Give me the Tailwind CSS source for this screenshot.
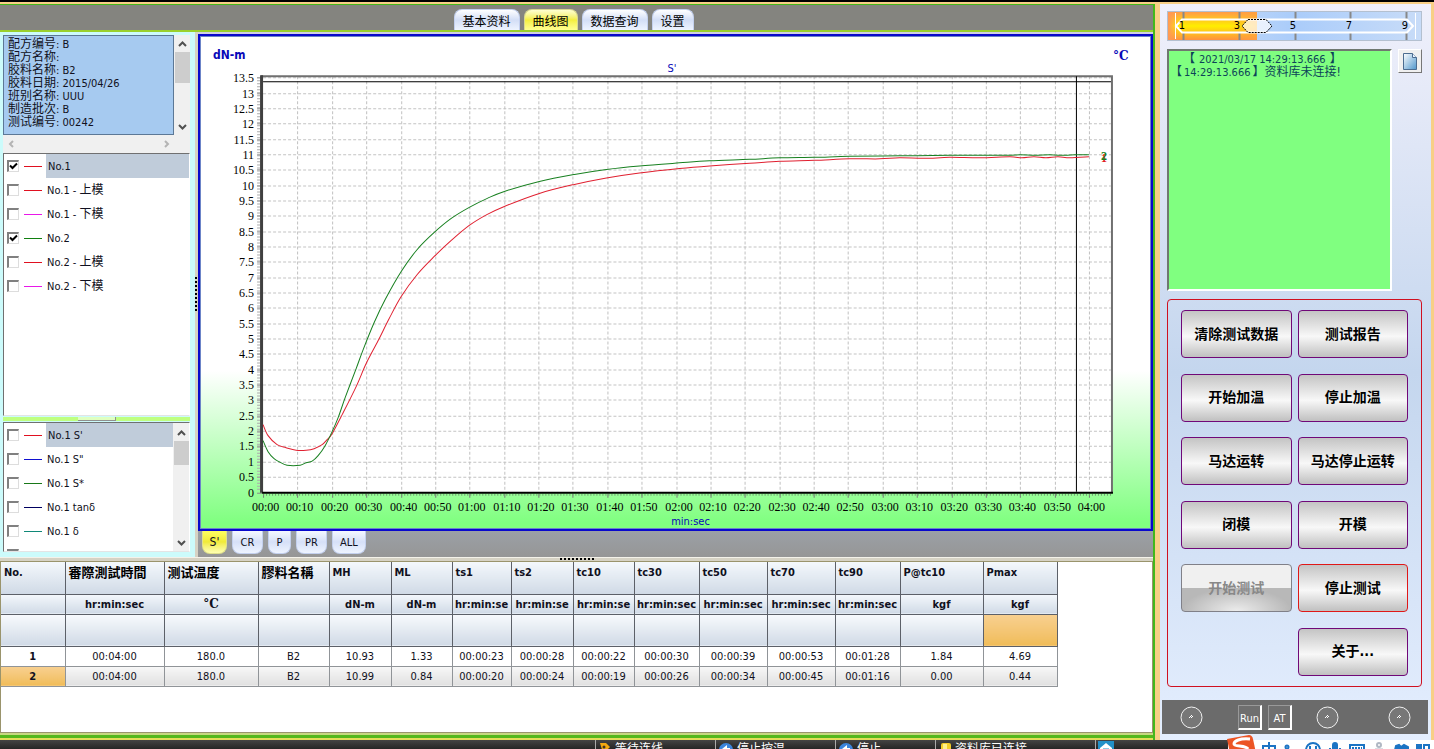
<!DOCTYPE html>
<html lang="zh-CN">
<head>
<meta charset="utf-8">
<title>曲线图</title>
<script src="https://cdn.jsdelivr.net/npm/@tailwindcss/browser@4"></script>
</head>
<body class="flex h-screen flex-col overflow-hidden border-t-2 border-black bg-[#f8cf86] font-['DejaVu_Sans_Condensed','Noto_Sans_CJK_SC',sans-serif] text-[11px] leading-[13px] text-[#101020]">

<div class="flex min-h-0 flex-1 pt-[2px]">
  <main class="flex min-w-0 flex-1 flex-col border-t border-r-2 border-[#43b81c] bg-[#d6d2c4]">

    <nav class="flex h-[27px] shrink-0 items-end justify-center gap-1 border-b-2 border-[#9ad02c] bg-[#84847f] pr-[6px] text-[12px] text-black">
      <button class="h-[21px] w-[66px] rounded-t-lg border border-b-0 border-[#c3d0ee] bg-linear-to-b from-white via-[#d3def6] to-[#eef4ff] pt-1">基本资料</button>
      <button class="h-[21px] w-[54px] rounded-t-lg border border-b-0 border-[#d8d890] bg-linear-to-b from-[#ffffd0] via-[#f4ee3c] to-[#ffff90] pt-1">曲线图</button>
      <button class="h-[21px] w-[66px] rounded-t-lg border border-b-0 border-[#c3d0ee] bg-linear-to-b from-white via-[#d3def6] to-[#eef4ff] pt-1">数据查询</button>
      <button class="h-[21px] w-[42px] rounded-t-lg border border-b-0 border-[#c3d0ee] bg-linear-to-b from-white via-[#d3def6] to-[#eef4ff] pt-1">设置</button>
    </nav>

    <div class="flex min-h-0 flex-1">
      <aside class="flex w-[195px] shrink-0 flex-col bg-[#ccfbfb] pt-[3px] pr-[5px] pb-[5px] pl-[3px]">
        <div class="flex h-[100px] shrink-0 bg-[#f0f0f0]">
          <div class="min-w-0 flex-1 border border-[#5c7896] bg-[#a6caf0] px-1 pt-[2px]">
            <p><span class="text-[12px]">配方编号</span>: B</p>
            <p><span class="text-[12px]">配方名称</span>:</p>
            <p><span class="text-[12px]">胶料名称</span>: B2</p>
            <p><span class="text-[12px]">胶料日期</span>: 2015/04/26</p>
            <p><span class="text-[12px]">班别名称</span>: UUU</p>
            <p><span class="text-[12px]">制造批次</span>: B</p>
            <p><span class="text-[12px]">测试编号</span>: 00242</p>
          </div>
          <div class="flex w-4 flex-col items-center justify-between pt-[6px] pb-[5px]">
            <svg class="h-[6px] w-[9px]" viewBox="0 0 9 6" fill="none" stroke="#505050" stroke-width="2"><path d="M1 5 4.500 1.500 8 5"/></svg>
            <div class="mb-auto mt-[5px] h-[31px] w-[15px] bg-[#cdcdcd]"></div>
            <svg class="h-[6px] w-[9px]" viewBox="0 0 9 6" fill="none" stroke="#505050" stroke-width="2"><path d="M1 1 4.500 4.500 8 1"/></svg>
          </div>
        </div>
        <div class="flex h-[18px] shrink-0 items-center justify-between bg-[#f0f0f0] pr-5 pl-[5px]">
          <svg class="h-[8px] w-[6px]" viewBox="0 0 6 8" fill="none" stroke="#b4b4b4" stroke-width="2"><path d="M5 1 2 4 5 7"/></svg>
          <svg class="h-[8px] w-[6px]" viewBox="0 0 6 8" fill="none" stroke="#b4b4b4" stroke-width="2"><path d="M1 1 4 4 1 7"/></svg>
        </div>
        <div id="molds" class="min-h-0 flex-1 overflow-hidden border border-[#707070] border-r-white border-b-[#e4e4e4] bg-white"></div>
        <div class="my-[1px] flex h-[4px] shrink-0 justify-center bg-[#bfff80]"><span class="w-[38px] border-r border-b border-[#909090] bg-[#dfffc0]"></span></div>
        <div class="flex h-[130px] shrink-0 overflow-hidden border border-[#707070] border-r-white border-b-[#e4e4e4] bg-white">
          <div id="series" class="min-w-0 flex-1 overflow-hidden"></div>
          <div class="flex w-4 flex-col items-center justify-between bg-[#f0f0f0] pt-[7px] pb-[5px]">
            <svg class="h-[6px] w-[9px]" viewBox="0 0 9 6" fill="none" stroke="#505050" stroke-width="2"><path d="M1 5 4.500 1.500 8 5"/></svg>
            <div class="mb-auto mt-[5px] h-6 w-[15px] bg-[#cdcdcd]"></div>
            <svg class="h-[6px] w-[9px]" viewBox="0 0 9 6" fill="none" stroke="#505050" stroke-width="2"><path d="M1 1 4.500 4.500 8 1"/></svg>
          </div>
        </div>
      </aside>
      <div class="flex w-[3px] shrink-0 flex-col pt-[245px]"><span class="h-[34px] border-l-2 border-dotted border-black"></span></div>

      <section class="flex min-w-0 flex-1 flex-col bg-[#d0d0e4] pt-[2px]">
        <div class="min-h-0 flex-1 border-2 border-[#0808cc]">
          <div class="h-full border border-[#6c84c8] bg-[linear-gradient(to_bottom,#fff_68%,#80ff80_99%)]">
            <svg id="chart" class="h-full w-full" viewBox="202 38 948 490" font-family="'Liberation Serif',serif" font-size="12"></svg>
          </div>
        </div>
        <div class="flex h-[26px] shrink-0 items-start gap-[5px] bg-linear-to-b from-[#9ba0a6] to-[#969696] pl-1 text-[12px]">
          <button class="h-[23px] w-[25px] rounded-b-lg border border-t-0 border-[#e0e08c] bg-linear-to-b from-[#ffff60] via-[#f0ea38] to-[#ffffb0]">S'</button>
          <button class="h-[23px] w-[31px] rounded-b-lg border border-t-0 border-[#c3d0ee] bg-linear-to-b from-[#f4f8ff] via-[#d6e0f8] to-[#eef4ff] text-[11px]">CR</button>
          <button class="h-[23px] w-[23px] rounded-b-lg border border-t-0 border-[#c3d0ee] bg-linear-to-b from-[#f4f8ff] via-[#d6e0f8] to-[#eef4ff] text-[11px]">P</button>
          <button class="h-[23px] w-[31px] rounded-b-lg border border-t-0 border-[#c3d0ee] bg-linear-to-b from-[#f4f8ff] via-[#d6e0f8] to-[#eef4ff] text-[11px]">PR</button>
          <button class="h-[23px] w-[34px] rounded-b-lg border border-t-0 border-[#c3d0ee] bg-linear-to-b from-[#f4f8ff] via-[#d6e0f8] to-[#eef4ff] text-[11px]">ALL</button>
        </div>
      </section>
    </div>

    <div class="flex h-[4px] shrink-0 justify-center border-t border-[#f4f2ea]"><span class="w-[34px] border-t-2 border-dotted border-black"></span></div>

    <section class="h-[172px] shrink-0 border border-[#9a946c] bg-white">
      <table class="w-[1056px] table-fixed border-collapse text-center">
        <colgroup id="cols"></colgroup>
        <thead id="thead"></thead>
        <tbody id="tbody"></tbody>
      </table>
    </section>
    <div class="h-[2px] shrink-0 bg-[#c8d880]"></div>
    <div class="h-[3px] shrink-0 bg-[#55b81c]"></div>
    <div class="h-[2px] shrink-0 bg-[#e4dc58]"></div>
  </main>

  <aside class="w-[279px] shrink-0 pr-[3px] pl-[5px]">
    <div class="flex h-full flex-col bg-[linear-gradient(to_bottom,#f0f0fb,#c4d6ee_50%,#e4eefe)] pt-[7px] pb-[6px]">
      <div class="relative mr-[9px] ml-[7px] h-[30px] shrink-0">
        <svg class="h-full w-full" viewBox="0 0 255 30" preserveAspectRatio="none" font-family="'DejaVu Sans Condensed'" font-size="11">
          <defs>
            <linearGradient id="heat" x2="0" y2="1"><stop offset="0" stop-color="#ff9a48"/><stop offset=".5" stop-color="#ffee00"/><stop offset="1" stop-color="#ff9040"/></linearGradient>
            <linearGradient id="fade"><stop offset="0" stop-color="#ff9858"/><stop offset=".12" stop-color="#ff9858" stop-opacity="0"/><stop offset=".7" stop-color="#ffa040" stop-opacity="0"/><stop offset="1" stop-color="#ffa040" stop-opacity=".7"/></linearGradient>
            <linearGradient id="cold"><stop offset="0" stop-color="#cfe0f8"/><stop offset=".5" stop-color="#aaccfa"/><stop offset="1" stop-color="#c8dcf8"/></linearGradient>
          </defs>
          <rect x=".5" y=".5" width="254" height="29" fill="url(#cold)" stroke="#b4c0d0"/>
          <rect x="1" y="1" width="89" height="28" fill="url(#heat)"/>
          <rect x="1" y="1" width="89" height="28" fill="url(#fade)"/>
          <path d="M16.500 1V9M16.500 22V29M72.500 1V9M72.500 22V29M128.500 1V9M128.500 22V29M183.500 1V9M183.500 22V29M239.500 1V9M239.500 22V29" stroke="#888" stroke-width="2"/>
          <path d="M8.500 2V28M248.500 2V28" stroke="#fff"/>
          <path d="M15 8.500H240L246 15 240 21.500H15L9 15Z" fill="none" stroke="#fff" stroke-width="2"/>
          <path d="M81 8.500H99L105 15 99 21.500H81L75 15Z" fill="#fff" fill-opacity=".7" stroke="#000" stroke-dasharray="2 1"/>
          <g text-anchor="middle" fill="#000"><text x="15" y="18">1</text><text x="70" y="18">3</text><text x="126" y="18">5</text><text x="182" y="18">7</text><text x="238" y="18">9</text></g>
        </svg>
        <input type="range" min="1" max="9" value="4" aria-label="级别" class="absolute inset-0 h-full w-full opacity-0">
      </div>
      <div class="mt-2 mr-[9px] ml-[7px] flex shrink-0 items-start justify-between">
        <div class="h-[242px] w-[225px] border-2 border-[#707870] border-r-white border-b-white bg-[#80ff80] pt-[2px] pl-[5px] text-[#0c4458]">
          <p class="flex"><span class="w-[9px]"></span><span class="text-[12px]">【</span><span class="pr-1 pl-1">2021/03/17 14:29:13.666</span><span class="text-[12px]">】</span></p>
          <p class="flex"><span class="-ml-1 text-[12px]">【</span><span class="pr-[2px] pl-[2px]">14:29:13.666</span><span class="text-[12px]">】资料库未连接!</span></p>
        </div>
        <button aria-label="新建" class="flex h-6 w-6 items-center justify-center border border-white border-r-[#777] border-b-[#777] bg-[#f0f0f0]">
          <svg class="h-[17px] w-[14px]" viewBox="0 0 14 17"><defs><linearGradient id="page" x2="1" y2="1"><stop offset="0" stop-color="#fff"/><stop offset="1" stop-color="#4f96cc"/></linearGradient></defs><path d="M.5.5h9l4 4v12H.5z" fill="url(#page)" stroke="#4c6c90"/><path d="M9.500.5v4h4" fill="#eaf4ff" stroke="#4c6c90"/></svg>
        </button>
      </div>
      <div class="mt-2 mr-[9px] ml-[7px] grid min-h-0 flex-1 grid-cols-2 content-between gap-x-[6px] rounded-[4px] border border-[#d01020] px-[13px] py-[10px] text-[14px] font-bold text-black">
        <button class="h-12 rounded-[4px] border border-[#700878] bg-[linear-gradient(to_bottom,#c4c4c4,#f8f8f8_55%,#c0c0c0)]">清除测试数据</button>
        <button class="h-12 rounded-[4px] border border-[#700878] bg-[linear-gradient(to_bottom,#c4c4c4,#f8f8f8_55%,#c0c0c0)]">测试报告</button>
        <button class="h-12 rounded-[4px] border border-[#700878] bg-[linear-gradient(to_bottom,#c4c4c4,#f8f8f8_55%,#c0c0c0)]">开始加温</button>
        <button class="h-12 rounded-[4px] border border-[#700878] bg-[linear-gradient(to_bottom,#c4c4c4,#f8f8f8_55%,#c0c0c0)]">停止加温</button>
        <button class="h-12 rounded-[4px] border border-[#700878] bg-[linear-gradient(to_bottom,#c4c4c4,#f8f8f8_55%,#c0c0c0)]">马达运转</button>
        <button class="h-12 rounded-[4px] border border-[#700878] bg-[linear-gradient(to_bottom,#c4c4c4,#f8f8f8_55%,#c0c0c0)]">马达停止运转</button>
        <button class="h-12 rounded-[4px] border border-[#700878] bg-[linear-gradient(to_bottom,#c4c4c4,#f8f8f8_55%,#c0c0c0)]">闭模</button>
        <button class="h-12 rounded-[4px] border border-[#700878] bg-[linear-gradient(to_bottom,#c4c4c4,#f8f8f8_55%,#c0c0c0)]">开模</button>
        <button disabled class="h-12 rounded-[4px] border border-[#808088] bg-[radial-gradient(ellipse_50%_50%_at_bottom,#ececec,transparent),linear-gradient(to_bottom,#f0f0f0_50%,#b8b8b8_50%)] text-[#888]">开始测试</button>
        <button class="h-12 rounded-[4px] border border-[#e01818] bg-[linear-gradient(to_bottom,#c4c4c4,#f8f8f8_55%,#c0c0c0)]">停止测试</button>
        <button class="col-start-2 h-12 rounded-[4px] border border-[#700878] bg-[linear-gradient(to_bottom,#c4c4c4,#f8f8f8_55%,#c0c0c0)]">关于...</button>
      </div>
      <div class="mr-[3px] ml-[2px] mt-[13px] flex h-[34px] shrink-0 items-center bg-[#6b6b6b] pr-[17px] pl-[18px] text-white">
        <svg class="h-[23px] w-[23px]" viewBox="0 0 23 23"><circle cx="11.500" cy="11.500" r="10.500" fill="#777" stroke="#f0f0f0"/><path d="M9 12l3-3M11 12l2-2" stroke="#fff"/></svg>
        <button class="ml-[35px] h-[25px] w-6 border border-[#999] border-r-2 border-b-2 border-r-white border-b-white bg-[#6f6f6f] pt-1">Run</button>
        <button class="ml-[6px] h-[25px] w-6 border border-[#999] border-r-2 border-b-2 border-r-white border-b-white bg-[#6f6f6f] pt-1">AT</button>
        <svg class="ml-6 h-[23px] w-[23px]" viewBox="0 0 23 23"><circle cx="11.500" cy="11.500" r="10.500" fill="#777" stroke="#f0f0f0"/><path d="M9 12l3-3M11 12l2-2" stroke="#fff"/></svg>
        <svg class="ml-auto h-[23px] w-[23px]" viewBox="0 0 23 23"><circle cx="11.500" cy="11.500" r="10.500" fill="#777" stroke="#f0f0f0"/><path d="M9 12l3-3M11 12l2-2" stroke="#fff"/></svg>
      </div>
    </div>
  </aside>
</div>

<footer class="relative flex h-[9px] shrink-0 items-start justify-end overflow-hidden bg-linear-to-b from-[#444] to-[#262626] text-[12px] text-white">
  <div class="flex flex-1 items-start justify-end">
    <div class="flex w-[120px] border-l border-[#aaa] pt-[3px] pl-[3px]"><svg class="mr-1 h-4 w-3" viewBox="0 0 12 16"><path d="M1 0h6l4 4-4 4 4 5-3 3-4-6z" fill="#f4a810"/><circle cx="5" cy="4" r="1.500" fill="#432"/></svg><span>等待连线</span></div>
    <div class="flex w-[120px] border-l border-[#aaa] pt-[3px] pl-[3px]"><svg class="mr-1 h-4 w-[14px]" viewBox="0 0 14 16"><circle cx="7" cy="7" r="7" fill="#3c84dc"/><path d="M3 6l5-4v3h3v3H8v3z" fill="#fff"/></svg><span>停止控温</span></div>
    <div class="flex w-[100px] border-l border-[#aaa] pt-[3px] pl-[3px]"><svg class="mr-1 h-4 w-[14px]" viewBox="0 0 14 16"><circle cx="7" cy="7" r="7" fill="#3c84dc"/><path d="M3 6l5-4v3h3v3H8v3z" fill="#fff"/></svg><span>停止</span></div>
    <div class="flex w-[160px] border-l border-[#aaa] pt-[3px] pl-[5px]"><svg class="mr-1 h-4 w-[10px]" viewBox="0 0 10 16"><rect width="10" height="14" rx="2" fill="#f4cc28"/><rect x="2" y="1" width="4" height="12" fill="#fff08c"/></svg><span>资料库已连接</span></div>
    <div class="w-[133px] border-l border-[#aaa] pt-[1px] pl-[2px]"><svg class="h-4 w-4" viewBox="0 0 16 16"><rect width="16" height="16" fill="#2290c8"/><path d="M2 7 8 2l6 5v7H2z" fill="#fff"/><path d="M5 8h6" stroke="#2290c8"/></svg></div>
  </div>
  <div class="flex h-4 w-[206px] items-start bg-white">
    <svg class="h-4 w-full" viewBox="0 0 206 16" fill="none" stroke="#1c74c4" stroke-width="2"><path d="M35 6h12v6H35zM41 2v14"/><circle cx="59" cy="7" r="1.500"/><circle cx="85" cy="10" r="7"/><path d="M82 6v3M88 6v3"/><rect x="105" y="3" width="4" height="9" rx="2" fill="#1c74c4"/><path d="M102 8c0 7 10 7 10 0"/><rect x="122" y="5" width="14" height="10"/><path d="M124 8h10" stroke-dasharray="2 1"/><circle cx="151" cy="5" r="2" stroke="#b0b8c4"/><path d="M147 10h8" stroke="#b0b8c4" stroke-width="3"/><path d="M168 6l3-1 2 2 3-2 4 2v3h-2v6h-9v-6h-2z" fill="#1c74c4"/><path d="M189 5h4v6h-4z" fill="#1c74c4"/><path d="M196 5h5v6h-5z"/></svg>
  </div>
</footer>
<svg class="absolute right-[178px] bottom-0 h-[14px] w-[30px]" viewBox="0 0 30 14"><path d="M1 4 23 0q3 0 4 4l3 14H4z" fill="#ec5424"/><path d="M24 4C14 3 8 6 8 9s12 1 14 5" fill="none" stroke="#fff" stroke-width="3"/></svg>

<script>
// Curve checklists
const row = ([name, mold, color, on, sel], i, id) => `
  <label class="flex h-6 items-center gap-[5px]" for="${id}${i}">
    <span class="relative ml-[3px] flex">
      <input id="${id}${i}" type="checkbox" ${on ? 'checked' : ''} class="peer h-3 w-3 appearance-none border border-t-2 border-l-2 border-[#808080] border-r-[#ddd] border-b-[#ddd] bg-white">
      <svg class="absolute inset-0 hidden h-3 w-3 peer-checked:block" viewBox="0 0 12 12" fill="none" stroke="#000" stroke-width="2"><path d="M3 5.500 5.500 8 10 3.500"/></svg>
    </span>
    <svg class="h-3 w-[18px] shrink-0" viewBox="0 0 18 12"><rect y="6" width="18" height="1" fill="${color}" shape-rendering="crispEdges"/></svg>
    <span class="${sel ? 'flex h-6 flex-1 items-center bg-[#c0ccda] pl-[2px] -ml-px' : ''}">${name}${mold ? `<span class="text-[12px]">${mold}</span>` : ''}</span>
  </label>`;
molds.innerHTML = [
  ['No.1', '', '#e01020', 1, 1], ['No.1 - ', '上模', '#e01020'], ['No.1 - ', '下模', '#e818e8'],
  ['No.2', '', '#108010', 1], ['No.2 - ', '上模', '#e01020'], ['No.2 - ', '下模', '#e818e8']
].map((r, i) => row(r, i, 'mold')).join('');
series.innerHTML = [
  ["No.1 S'", '', '#e01020', 0, 1], ['No.1 S"', '', '#1010d0'], ['No.1 S*', '', '#187818'],
  ['No.1 tanδ', '', '#000060'], ['No.1 δ', '', '#108878'], ['', '', '#e01020']
].map((r, i) => row(r, i, 'series')).join('');

// Result table
const widths = [64, 99, 94, 71, 62, 61, 59, 62, 61, 65, 68, 68, 65, 83, 74];
cols.innerHTML = widths.map(w => `<col style="width:${w}px">`).join('');
const heads = ['No.', '審際測試時間', '测试温度', '膠料名稱', 'MH', 'ML', 'ts1', 'ts2', 'tc10', 'tc30', 'tc50', 'tc70', 'tc90', 'P@tc10', 'Pmax'];
const units = ['', 'hr:min:sec', '°C', '', 'dN-m', 'dN-m', 'hr:min:se', 'hr:min:se', 'hr:min:se', 'hr:min:sec', 'hr:min:sec', 'hr:min:sec', 'hr:min:sec', 'kgf', 'kgf'];
thead.innerHTML =
  '<tr class="h-8">' + heads.map((h, i) => `<th class="border-r border-b border-[#5c6068] bg-linear-to-b from-[#f4f8fc] to-[#d0dae6] pt-1 pl-[3px] text-left align-top whitespace-nowrap ${i > 0 && i < 4 ? 'text-[13px] text-black' : ''}">${h}</th>`).join('') + '</tr>' +
  '<tr class="h-5">' + units.map(u => `<th class="border-r border-b border-[#5c6068] bg-linear-to-b from-[#f4f8fc] to-[#d0dae6] whitespace-nowrap ${u == '°C' ? 'font-[DejaVu_Serif] text-[12px]' : ''}">${u}</th>`).join('') + '</tr>' +
  '<tr class="h-8">' + units.map((u, i) => `<td class="border-r border-b border-[#5c6068] bg-linear-to-b ${i == 14 ? 'from-[#f8d090] to-[#f0bc58]' : 'from-[#f8fafd] to-[#d0dae6]'}"></td>`).join('') + '</tr>';
const data = [
  ['1', '00:04:00', '180.0', 'B2', '10.93', '1.33', '00:00:23', '00:00:28', '00:00:22', '00:00:30', '00:00:39', '00:00:53', '00:01:28', '1.84', '4.69'],
  ['2', '00:04:00', '180.0', 'B2', '10.99', '0.84', '00:00:20', '00:00:24', '00:00:19', '00:00:26', '00:00:34', '00:00:45', '00:01:16', '0.00', '0.44']
];
tbody.innerHTML = data.map((d, r) => '<tr class="h-5">' + d.map((v, i) =>
  `<td class="border-r border-b border-[#909498] ${i ? '' : 'font-bold'} ${r ? (i ? 'bg-linear-to-b from-[#f8f8f8] to-[#e0e0e0]' : 'bg-linear-to-b from-[#f8d090] to-[#f0bc58]') : ''}">${v}</td>`).join('') + '</tr>').join('');

// Torque chart
const X = s => 264 + s * 3.4375, Y = v => 492.5 - v * 30.67;
const two = n => String(n).padStart(2, '0');
let g = '<rect x="264" y="76" width="848" height="417" fill="#fff"/>';
for (let v = 0; v <= 27; v++) {
  const y = Math.round(Y(v / 2)) + .5;
  if (v) g += `<path d="M264 ${y}H1111" stroke="#c4c4c4" stroke-dasharray="3 2"/>`;
  g += `<path d="M258 ${y}H263" stroke="#888"/><text x="255" y="${y + 4}" text-anchor="end">${v / 2}</text>`;
}
for (let s = 0; s <= 240; s += 10) {
  const x = Math.round(X(s)) + .5;
  if (s) g += `<path d="M${x} 77V492" stroke="#c0c0c0" stroke-dasharray="3 2"/>`;
  g += `<path d="M${x} 494V498" stroke="#777"/><text x="${x + 2}" y="511" text-anchor="middle">${two(Math.floor(s / 60))}:${two(s % 60)}</text>`;
}
g += '<path d="M264 495H1112" stroke="#70a070" stroke-width="2" stroke-dasharray="1 2"/><path d="M259.500 78V492" stroke="#aaa" stroke-width="3" stroke-dasharray="1 2"/>';
g += '<path d="M262 77H1113M1112 76V493" stroke="#707070" stroke-width="2" fill="none"/><path d="M262.500 76V493" stroke="#404040" stroke-width="3"/><path d="M263 493H1113" stroke="#000" stroke-width="2"/>';
g += '<path d="M264 82.500H1111M1076.500 77V492" stroke="#000"/>';
// Catmull-Rom spline through the sampled points
const spline = p => {
  let d = `M${p[0]}`;
  for (let i = 0; i < p.length - 1; i++) {
    const a = p[i - 1] || p[i], b = p[i], c = p[i + 1], e = p[i + 2] || c;
    d += `C${b[0] + (c[0] - a[0]) / 6} ${b[1] + (c[1] - a[1]) / 6} ${c[0] - (e[0] - b[0]) / 6} ${c[1] - (e[1] - b[1]) / 6} ${c}`;
  }
  return d;
};
const red = [[264,425],[269,436],[278,445],[287,448],[297,450.5],[307,450.5],[315,449],[323,445],[328,440],[333,434],[343,415],[357,387],[367,364],[379,341],[390,319],[402,297],[418,275],[435,257],[452,241],[470,226],[488,215],[505,207],[540,194],[575,185],[607,178.5],[640,173.5],[680,169],[710,166.5],[750,164],[780,162],[815,161],[850,159.500],[880,159.5],[900,158.500],[925,159],[950,158],[980,158.500],[1010,157.500],[1022,158.500],[1034,157.5],[1046,158.500],[1058,157.5],[1070,158.500],[1089,157.500]];
const green = [[264,441],[269,452],[275,459],[280,462],[288,465.5],[301,465.5],[307,463],[313,461.500],[319,456],[326,446],[333,432],[339,418],[346,398],[357,369],[364,350],[375,323],[386,300],[402,272],[418,250],[435,233],[452,219],[470,208],[488,199],[505,192],[540,182],[575,175],[607,170],[640,166.5],[680,163.500],[710,161.5],[750,160],[780,158.500],[815,158],[850,157],[900,156.5],[950,156],[1005,156],[1020,155.500],[1035,156],[1050,155.500],[1065,156],[1075,155.500],[1089,155.500]];
g += `<path d="${spline(red)}" fill="none" stroke="#e02030"/><path d="${spline(green)}" fill="none" stroke="#188020"/>`;
g += '<g font-weight="bold"><text x="1101" y="163" fill="#e02020">1</text><text x="1101" y="161" fill="#188020">2</text></g>';
g += `<g fill="#0808b8" font-family="'DejaVu Sans Condensed'" font-size="11"><text x="214" y="60" font-weight="bold" font-size="12">dN-m</text><text x="668" y="73">S'</text><text x="691" y="525" text-anchor="middle">min:sec</text><text x="1113" y="61" font-weight="bold" font-family="DejaVu Serif" font-size="12">°C</text></g>`;
chart.innerHTML = g;
</script>
</body>
</html>
